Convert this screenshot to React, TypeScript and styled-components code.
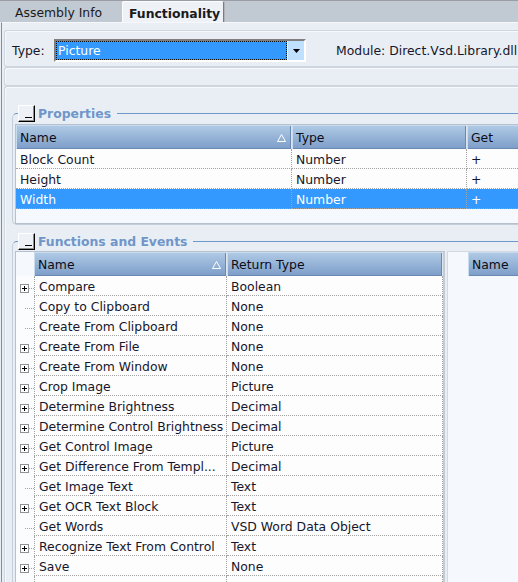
import * as React from "react";
import styled, { createGlobalStyle } from "styled-components";

const FONT = `"DejaVu Sans", Verdana, sans-serif`;
const DOT = "#a3a3a3";
const ROW_HEIGHT = 20;

const GlobalStyle = createGlobalStyle`
  html, body {
    margin: 0;
    padding: 0;
    overflow: hidden;
    background: #e9eef5;
  }
  body {
    font-family: ${FONT};
    font-size: 12.4px;
    color: #16162a;
  }
`;

const Page = styled.div`
  width: 600px;
  height: 582px;
  overflow: hidden;
  display: flex;
  flex-direction: column;
`;

const TabStrip = styled.div`
  height: 22px;
  border-top: 1px solid #9a9ea4;
  background: #c1c9d2;
  display: flex;
  align-items: flex-end;
  padding-left: 7px;
`;

const Tab = styled.div<{ $active?: boolean; $width: number }>`
  width: ${p => p.$width}px;
  height: 21px;
  box-sizing: border-box;
  display: flex;
  align-items: center;
  padding: 2px 0 0 ${p => (p.$active ? 6 : 8)}px;
  font-weight: ${p => (p.$active ? "bold" : "normal")};
  color: #1a1a1a;
  ${p =>
    p.$active &&
    `
    background: #eef1f6;
    border-top: 1px solid #fdfdfd;
    border-left: 1px solid #fdfdfd;
    border-right: 1px solid #7c7c7c;
    box-shadow: 1px 0 #b0b4b9;
    border-radius: 2px 2px 0 0;
  `}
`;

const Content = styled.div`
  flex: 1;
  margin-left: 1px;
  border-left: 1px solid #878d95;
  border-top: 1px solid #f6f8fb;
  padding: 7px 0 0 2px;
  display: flex;
  flex-direction: column;
`;

const Panel = styled.div<{ $height?: number }>`
  border: 1px solid #cdd5df;
  border-right: none;
  border-radius: 3px 0 0 3px;
  box-shadow: inset 1px 1px #f7f9fc;
  ${p => (p.$height ? `height: ${p.$height}px;` : "flex: 1;")}
`;

const TypeBar = styled(Panel)`
  display: flex;
  align-items: flex-start;
  padding: 8px 0 0 7px;
  box-sizing: content-box;
`;

const TypeLabel = styled.span`
  width: 42px;
  line-height: 23px;
`;

const Combo = styled.div`
  width: 252px;
  height: 23px;
  box-sizing: border-box;
  border: 2px solid;
  border-color: #7f7f7f #ffffff #ffffff #7f7f7f;
  display: flex;
`;

const ComboValue = styled.div`
  flex: 1;
  background: #3399ff;
  color: #ffffff;
  border: 1px dotted #111;
  padding-left: 1px;
  line-height: 18px;
`;

const ComboButton = styled.div`
  width: 16px;
  background: #bfe0ff;
  border-left: 1px solid #eaf4ff;
  display: flex;
  align-items: center;
  justify-content: center;
`;

const ModuleText = styled.span`
  margin-left: 30px;
  line-height: 23px;
  white-space: nowrap;
`;

const MainPanel = styled(Panel)`
  padding: 18px 0 0 7px;
`;

const Group = styled.fieldset<{ $gap?: number }>`
  margin: 0 0 ${p => p.$gap ?? 0}px 0;
  padding: 0 0 0 2px;
  min-width: 0;
  border: 1px solid #c4ceda;
  border-top-color: #6f98cc;
  border-right: none;
  border-radius: 5px 0 0 5px;
`;

const Legend = styled.legend`
  margin-left: 3px;
  padding: 0 6px 0 0;
`;

const LegendInner = styled.div`
  display: flex;
  align-items: center;
  gap: 3px;
  height: 16px;
`;

const CollapseButton = styled.span`
  width: 17px;
  height: 17px;
  box-sizing: border-box;
  background: #eef1f5;
  border-left: 1px solid #ffffff;
  border-top: 1px solid #ffffff;
  border-right: 1px solid #000;
  border-bottom: 1px solid #000;
  box-shadow: inset -1px -1px #8d8d8d;
  display: flex;
  align-items: flex-start;
  padding: 11px 0 0 6px;
`;

const GroupTitle = styled.span`
  font-weight: bold;
  color: #7096c9;
`;

const Grid = styled.div<{ $top: number; $height?: number }>`
  margin-top: ${p => p.$top}px;
  border: 1px solid #b7c1cd;
  border-right: none;
  background: #f5f8fc;
  ${p => (p.$height ? `height: ${p.$height}px;` : "")}
`;

const HeaderRow = styled.div`
  display: flex;
  height: 24px;
`;

const HeaderCell = styled.div<{ $width?: number }>`
  ${p => (p.$width ? `width: ${p.$width}px;` : "flex: 1;")}
  flex-shrink: 0;
  box-sizing: border-box;
  height: 24px;
  background: linear-gradient(#b1cbe6, #7c9dc9);
  border-right: 1px solid #dfe5ec;
  box-shadow: inset 1px 1px #c9dbee, inset -1px -1px #6a88b1;
  display: flex;
  align-items: center;
  justify-content: space-between;
  padding: 1px 5px 0 4px;
  color: #0c0c18;
  white-space: nowrap;
`;

const TreeSpacer = styled.div<{ $width: number }>`
  width: ${p => p.$width}px;
  flex-shrink: 0;
`;

const Row = styled.div<{ $selected?: boolean }>`
  display: flex;
  height: ${ROW_HEIGHT}px;
  background: ${p => (p.$selected ? "#3399ff" : "#fdfdfe")};
  color: ${p => (p.$selected ? "#ffffff" : "inherit")};
`;

const Cell = styled.div<{ $width?: number; $leftLine?: boolean }>`
  ${p => (p.$width ? `width: ${p.$width}px;` : "flex: 1;")}
  flex-shrink: 0;
  box-sizing: border-box;
  height: ${ROW_HEIGHT}px;
  line-height: ${ROW_HEIGHT - 1}px;
  padding: 1px 0 0 4px;
  border-bottom: 1px dotted ${DOT};
  border-right: 1px dotted ${DOT};
  ${p => (p.$leftLine ? `border-left: 1px dotted ${DOT};` : "")}
  white-space: nowrap;
  overflow: hidden;
`;

const TreeCell = styled.div`
  width: 18px;
  flex-shrink: 0;
  height: ${ROW_HEIGHT}px;
  background: #fbfcfe;
`;

const Split = styled.div`
  display: flex;
  gap: 2px;
  margin-top: 2px;
  height: 340px;
`;

const FuncGrid = styled.div`
  width: 430px;
  box-sizing: border-box;
  border: 1px solid #b7c1cd;
  border-right: 2px solid #c3cbd5;
  background: #f5f8fc;
`;

const EventGrid = styled.div`
  flex: 1;
  border-left: 1px solid #d2d9e2;
  border-top: 1px solid #d2d9e2;
  background: #f5f8fc;
`;

const SortMark = () => (
  <svg width="9" height="8" viewBox="0 0 9 8">
    <path d="M0.5 7.5 L4.5 0.5 L8.5 7.5 Z" fill="none" stroke="#ffffff" strokeWidth="1" />
  </svg>
);

const DropArrow = () => (
  <svg width="7" height="4" viewBox="0 0 7 4">
    <path d="M0 0 H7 L3.5 4 Z" fill="#000" />
  </svg>
);

const Minus = () => (
  <svg width="7" height="1" viewBox="0 0 7 1">
    <rect width="7" height="1" fill="#000" />
  </svg>
);

const Expander = ({ children }: { children: boolean }) => (
  <svg width="18" height="20" viewBox="0 0 18 20">
    {children ? (
      <>
        <rect x="4.5" y="8.5" width="8" height="8" fill="#fff" stroke="#929292" />
        <path d="M6 12.5h5M8.5 10v5" stroke="#000" />
        <path d="M13 12.5h5" stroke={DOT} strokeDasharray="1 1" />
      </>
    ) : (
      <path d="M9 12.5h9" stroke={DOT} strokeDasharray="1 1" />
    )}
  </svg>
);

const GroupHeader = ({ title }: { title: string }) => (
  <Legend>
    <LegendInner>
      <CollapseButton>
        <Minus />
      </CollapseButton>
      <GroupTitle>{title}</GroupTitle>
    </LegendInner>
  </Legend>
);

const properties = [
  { name: "Block Count", type: "Number", get: "+" },
  { name: "Height", type: "Number", get: "+" },
  { name: "Width", type: "Number", get: "+", selected: true },
];

const functions: [string, string, boolean][] = [
  ["Compare", "Boolean", true],
  ["Copy to Clipboard", "None", false],
  ["Create From Clipboard", "None", false],
  ["Create From File", "None", true],
  ["Create From Window", "None", true],
  ["Crop Image", "Picture", true],
  ["Determine Brightness", "Decimal", true],
  ["Determine Control Brightness", "Decimal", true],
  ["Get Control Image", "Picture", true],
  ["Get Difference From Templ...", "Decimal", true],
  ["Get Image Text", "Text", false],
  ["Get OCR Text Block", "Text", true],
  ["Get Words", "VSD Word Data Object", false],
  ["Recognize Text From Control", "Text", true],
  ["Save", "None", true],
];

export default function App() {
  return (
    <Page>
      <GlobalStyle />
      <TabStrip>
        <Tab $width={115}>Assembly Info</Tab>
        <Tab $width={102} $active>
          Functionality
        </Tab>
      </TabStrip>
      <Content>
        <TypeBar $height={27}>
          <TypeLabel>Type:</TypeLabel>
          <Combo>
            <ComboValue>Picture</ComboValue>
            <ComboButton>
              <DropArrow />
            </ComboButton>
          </Combo>
          <ModuleText>Module: Direct.Vsd.Library.dll</ModuleText>
        </TypeBar>
        <Panel $height={17} />
        <MainPanel>
          <Group $gap={8}>
            <GroupHeader title="Properties" />
            <Grid $top={3} $height={98}>
              <HeaderRow>
                <HeaderCell $width={276}>
                  Name
                  <SortMark />
                </HeaderCell>
                <HeaderCell $width={175}>Type</HeaderCell>
                <HeaderCell>Get</HeaderCell>
              </HeaderRow>
              {properties.map(p => (
                <Row key={p.name} $selected={p.selected}>
                  <Cell $width={276}>{p.name}</Cell>
                  <Cell $width={175}>{p.type}</Cell>
                  <Cell>{p.get}</Cell>
                </Row>
              ))}
            </Grid>
          </Group>
          <Group>
            <GroupHeader title="Functions and Events" />
            <Split>
              <FuncGrid>
                <HeaderRow>
                  <TreeSpacer $width={18} />
                  <HeaderCell $width={193}>
                    Name
                    <SortMark />
                  </HeaderCell>
                  <HeaderCell $width={216}>Return Type</HeaderCell>
                </HeaderRow>
                {functions.map(([name, ret, children]) => (
                  <Row key={name}>
                    <TreeCell>
                      <Expander>{children}</Expander>
                    </TreeCell>
                    <Cell $width={193} $leftLine>
                      {name}
                    </Cell>
                    <Cell $width={216}>{ret}</Cell>
                  </Row>
                ))}
                <Row>
                  <TreeCell />
                  <Cell $width={193} $leftLine />
                  <Cell $width={216} />
                </Row>
              </FuncGrid>
              <EventGrid>
                <HeaderRow>
                  <TreeSpacer $width={20} />
                  <HeaderCell>Name</HeaderCell>
                </HeaderRow>
              </EventGrid>
            </Split>
          </Group>
        </MainPanel>
      </Content>
    </Page>
  );
}
